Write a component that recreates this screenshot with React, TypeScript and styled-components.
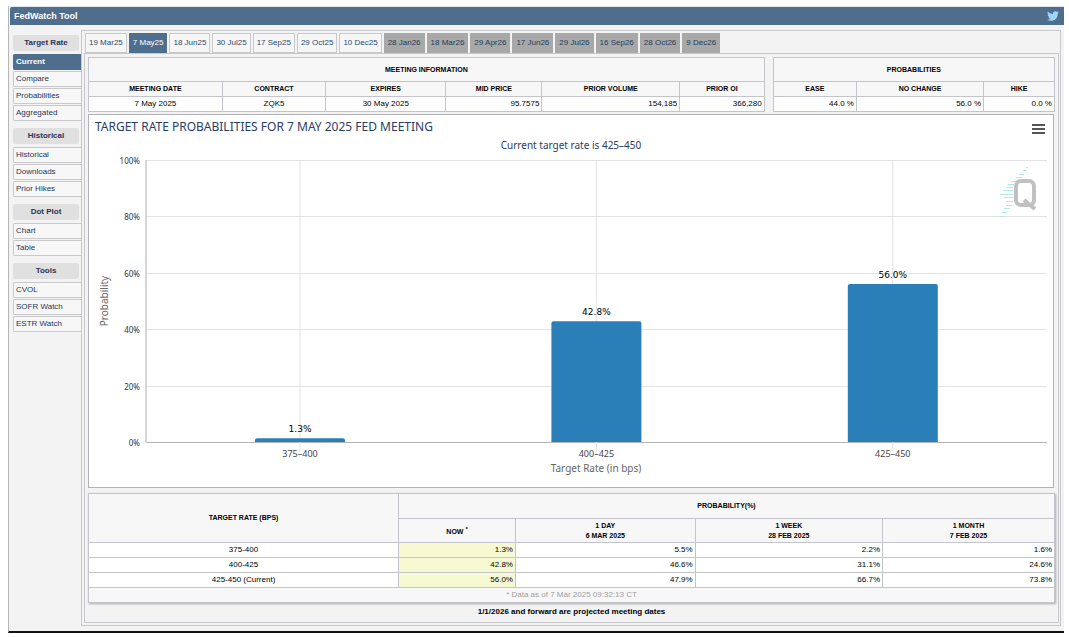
import React from "react";
import styled, { createGlobalStyle, css } from "styled-components";
import { FaTwitter } from "react-icons/fa";

const GlobalStyle = createGlobalStyle`
  * { box-sizing: border-box; }
  body { margin: 0; background: #fff; font-family: "Liberation Sans", Arial, sans-serif; font-size: 8px; line-height: 10px; color: #000; }
  button { font: inherit; }
`;

const chartFont = `"Noto Sans", "Lucida Grande", sans-serif`;
const valueFont = `"DejaVu Sans", "Lucida Grande", sans-serif`;

const Frame = styled.div`
  margin: 6px 5px 0 8px;
  border-left: 1px solid #b4b6b9;
  border-top: 1px solid #e4e6ea;
  border-bottom: 2px solid #111;
  background: #f3f3f3;
`;
const TitleBar = styled.header`
  display: flex;
  align-items: center;
  justify-content: space-between;
  height: 18px;
  margin-left: 1px;
  padding: 0 5px 1px 4px;
  background: #4f6d8d;
  border-radius: 2px 0 0 0;
`;
const AppName = styled.h1`
  margin: 0;
  color: #fff;
  font-size: 9px;
  line-height: 12px;
`;
const SocialLink = styled.a`
  display: flex;
  color: #9ed6fb;
  font-size: 12px;
`;
const Body = styled.div`
  display: flex;
  padding: 5px 3px 5px 4px;
`;
const Sidebar = styled.nav`
  flex: 0 0 68px;
  padding-top: 5px;
`;
const Group = styled.section`
  margin-bottom: 7px;
`;
const GroupTitle = styled.h2`
  margin: 0 2px 3px 0;
  padding: 0;
  height: 16px;
  line-height: 16px;
  font-size: 8px;
  text-align: center;
  color: #2a3454;
  background: #e0e0e0;
  border-radius: 2px;
`;
const NavItem = styled.a<{ $active?: boolean }>`
  display: block;
  height: 16px;
  margin-bottom: 1px;
  padding-left: 2px;
  line-height: 14px;
  border: 1px solid #c9c9cb;
  border-right: 0;
  border-radius: 2px 0 0 2px;
  background: #f7f7f8;
  color: #2a3454;
  text-decoration: none;
  ${(p) => p.$active && css`
    background: #4f6d8d;
    border-color: #4f6d8d;
    color: #fff;
    font-weight: bold;
  `}
`;
const Panel = styled.main`
  flex: 1;
  min-width: 0;
  padding: 2px 1px 2px 2px;
  border: 1px solid #c6c8cc;
`;
const Tabs = styled.div`
  display: flex;
  gap: 2px;
  padding-left: 1px;
`;
const Tab = styled.button<{ $kind: string }>`
  height: 20px;
  padding: 0 3px;
  border: 1px solid #c9c9cb;
  background: #f6f6f7;
  color: #2b4a6b;
  white-space: nowrap;
  ${(p) => p.$kind === "active" && css`
    background: #4f6d8d;
    border-color: #4f6d8d;
    color: #fff;
  `}
  ${(p) => p.$kind === "projected" && css`
    background: #a8a8a8;
    border-color: #a8a8a8;
    color: #1f3d58;
  `}
`;
const Content = styled.div`
  padding: 3px;
  border: 1px solid #c6c8cc;
`;
const Summary = styled.div`
  display: grid;
  grid-template-columns: 676fr 282fr;
  gap: 8px;
  margin-bottom: 2px;
`;
const Table = styled.table<{ $shadow?: boolean }>`
  width: 100%;
  table-layout: fixed;
  border-collapse: collapse;
  background: #fff;
  box-shadow: ${(p) => (p.$shadow ? "1px 1px 2px #aaa" : "none")};
`;
const Col = styled.col<{ $w: number }>`
  width: ${(p) => p.$w}%;
`;
const Th = styled.th<{ $h: number }>`
  height: ${(p) => p.$h}px;
  padding: 0;
  border: 1px solid #c3c5cb;
  background: #f7f7f8;
  font-size: 7px;
  line-height: 10px;
  text-transform: uppercase;
`;
const Td = styled.td<{ $align?: string; $now?: boolean }>`
  height: 15px;
  padding: 0 2px;
  border: 1px solid #c3c5cb;
  line-height: 12px;
  text-align: ${(p) => p.$align || "right"};
  background: ${(p) => (p.$now ? "#f7f9d2" : "#fff")};
`;
const NoteCell = styled.td`
  height: 15px;
  padding: 0;
  border: 1px solid #c3c5cb;
  background: #f7f7f8;
  color: #a0a0a0;
  text-align: center;
`;
const ChartCard = styled.section`
  margin: 0 1px 5px 0;
  padding-top: 4px;
  border: 1px solid #b0b2b6;
  background: #fff;
  font-family: ${chartFont};
`;
const ChartHead = styled.div`
  display: flex;
  justify-content: space-between;
  padding: 0 8px 0 6px;
`;
const ChartTitle = styled.h2`
  margin: 0;
  font-size: 12px;
  line-height: 16px;
  font-weight: normal;
  color: #2a3d63;
`;
const MenuButton = styled.button`
  display: flex;
  align-items: center;
  padding: 4px 0 0;
  border: 0;
  background: none;
`;
const Subtitle = styled.p`
  margin: 4px 0 4px;
  font-size: 10px;
  line-height: 12px;
  text-align: center;
  color: #2a3d63;
`;
const Plot = styled.svg`
  display: block;
  width: 100%;
  height: auto;
`;
const Footnote = styled.p`
  margin: 4px 0 2px;
  text-align: center;
  font-weight: bold;
`;

const groups = [
  { title: "Target Rate", items: ["Current", "Compare", "Probabilities", "Aggregated"] },
  { title: "Historical", items: ["Historical", "Downloads", "Prior Hikes"] },
  { title: "Dot Plot", items: ["Chart", "Table"] },
  { title: "Tools", items: ["CVOL", "SOFR Watch", "ESTR Watch"] },
];
const meetings = [
  "19 Mar25", "7 May25", "18 Jun25", "30 Jul25", "17 Sep25", "29 Oct25", "10 Dec25",
  "28 Jan26", "18 Mar26", "29 Apr26", "17 Jun26", "29 Jul26", "16 Sep26", "28 Oct26", "9 Dec26",
];
const bars = [
  { label: "375–400", value: 1.3 },
  { label: "400–425", value: 42.8 },
  { label: "425–450", value: 56.0 },
];
const rows = [
  ["375-400", "1.3%", "5.5%", "2.2%", "1.6%"],
  ["400-425", "42.8%", "46.6%", "31.1%", "24.6%"],
  ["425-450 (Current)", "56.0%", "47.9%", "66.7%", "73.8%"],
];
const stripes = [
  [37, 2, 0], [34, 3, 3], [30, 5, 7], [27, 6, 10], [22, 5, 14], [19, 6, 17], [17, 7, 20],
  [14, 10, 23], [11, 13, 27], [15, 9, 30], [17, 7, 34], [17, 6, 38], [15, 6, 41], [13, 5, 45], [11, 4, 49],
];

const BASE = 287;
const SPAN = 282;

function BarChart() {
  return (
    <Plot viewBox="0 0 964 332" fontFamily={chartFont} role="img" aria-label="Target rate probabilities">
      {[0, 20, 40, 60, 80, 100].map((v) => {
        const y = Math.round(BASE - (v / 100) * SPAN) + 0.5;
        return (
          <g key={v}>
            <line x1="57" x2="958" y1={y} y2={y} stroke={v ? "#e3e3e3" : "#b5b5b5"} />
            <text x="51" y={y + 3} fontSize="8" textAnchor="end" fill="#333">{v}%</text>
          </g>
        );
      })}
      <line x1="57" x2="57" y1="5" y2={BASE + 1} stroke="#d6d6d6" strokeWidth="2" />
      {bars.map((b, i) => {
        const cx = 211 + i * 296.4;
        const h = (b.value / 100) * SPAN;
        return (
          <g key={b.label}>
            <line x1={cx} x2={cx} y1="5" y2={BASE + 10} stroke="#e3e3e3" />
            <path
              d={`M${cx - 45} ${BASE}V${BASE - h + 2}q0-2 2-2h86q2 0 2 2V${BASE}z`}
              fill="#2a7fb9"
            />
            <text x={cx} y={BASE - h - 6} fontFamily={valueFont} fontSize="9" textAnchor="middle" fill="#000">{b.value.toFixed(1)}%</text>
            <text x={cx} y={BASE + 15} fontSize="9" textAnchor="middle" fill="#444">{b.label}</text>
          </g>
        );
      })}
      <text x="507" y="317" fontSize="10" textAnchor="middle" fill="#666">Target Rate (in bps)</text>
      <text transform="translate(19 146) rotate(-90)" fontSize="10" textAnchor="middle" fill="#666">Probability</text>
      <g transform="translate(900 12)">
        {stripes.map(([x, w, y]) => (
          <rect key={y} x={x} y={y} width={w} height="1" fill="#b5e6ee" />
        ))}
        <rect x="27" y="14" width="18" height="24" rx="5" fill="none" stroke="#c0c0c0" strokeWidth="4" />
        <path d="M35 33L46 42" stroke="#c0c0c0" strokeWidth="4" />
      </g>
    </Plot>
  );
}

export default function App() {
  return (
    <>
      <GlobalStyle />
      <Frame>
        <TitleBar>
          <AppName>FedWatch Tool</AppName>
          <SocialLink href="#" aria-label="Twitter"><FaTwitter /></SocialLink>
        </TitleBar>
        <Body>
          <Sidebar>
            {groups.map((g) => (
              <Group key={g.title}>
                <GroupTitle>{g.title}</GroupTitle>
                {g.items.map((it) => (
                  <NavItem key={it} href="#" $active={it === "Current"}>{it}</NavItem>
                ))}
              </Group>
            ))}
          </Sidebar>
          <Panel>
            <Tabs>
              {meetings.map((m, i) => (
                <Tab key={m} type="button" $kind={i === 1 ? "active" : i > 6 ? "projected" : "normal"}>{m}</Tab>
              ))}
            </Tabs>
            <Content>
              <Summary>
                <Table>
                  <colgroup>
                    <Col $w={19.8} /><Col $w={15.3} /><Col $w={17.8} /><Col $w={14.2} /><Col $w={20.4} /><Col $w={12.5} />
                  </colgroup>
                  <thead>
                    <tr><Th $h={24} colSpan={6}>Meeting Information</Th></tr>
                    <tr>
                      {["Meeting Date", "Contract", "Expires", "Mid Price", "Prior Volume", "Prior OI"].map((h) => (
                        <Th key={h} $h={15}>{h}</Th>
                      ))}
                    </tr>
                  </thead>
                  <tbody>
                    <tr>
                      <Td $align="center">7 May 2025</Td>
                      <Td $align="center">ZQK5</Td>
                      <Td $align="center">30 May 2025</Td>
                      <Td>95.7575</Td>
                      <Td>154,185</Td>
                      <Td>366,280</Td>
                    </tr>
                  </tbody>
                </Table>
                <Table>
                  <colgroup><Col $w={29.6} /><Col $w={45.2} /><Col $w={25.2} /></colgroup>
                  <thead>
                    <tr><Th $h={24} colSpan={3}>Probabilities</Th></tr>
                    <tr><Th $h={15}>Ease</Th><Th $h={15}>No Change</Th><Th $h={15}>Hike</Th></tr>
                  </thead>
                  <tbody>
                    <tr><Td>44.0 %</Td><Td>56.0 %</Td><Td>0.0 %</Td></tr>
                  </tbody>
                </Table>
              </Summary>
              <ChartCard>
                <ChartHead>
                  <ChartTitle>TARGET RATE PROBABILITIES FOR 7 MAY 2025 FED MEETING</ChartTitle>
                  <MenuButton type="button" aria-label="Chart menu">
                    <svg width="13" height="12" viewBox="0 0 13 12">
                      <path d="M0 2h13M0 6h13M0 10h13" stroke="#555" strokeWidth="2" />
                    </svg>
                  </MenuButton>
                </ChartHead>
                <Subtitle>Current target rate is 425–450</Subtitle>
                <BarChart />
              </ChartCard>
              <Table $shadow>
                <colgroup><Col $w={32.1} /><Col $w={12.1} /><Col $w={18.6} /><Col $w={19.4} /><Col $w={17.8} /></colgroup>
                <thead>
                  <tr><Th $h={25} rowSpan={2}>Target Rate (bps)</Th><Th $h={25} colSpan={4}>Probability(%)</Th></tr>
                  <tr>
                    <Th $h={24}>Now <sup>*</sup></Th>
                    <Th $h={24}>1 Day<br />6 Mar 2025</Th>
                    <Th $h={24}>1 Week<br />28 Feb 2025</Th>
                    <Th $h={24}>1 Month<br />7 Feb 2025</Th>
                  </tr>
                </thead>
                <tbody>
                  {rows.map((r) => (
                    <tr key={r[0]}>
                      {r.map((c, i) => (
                        <Td key={i} $align={i ? "right" : "center"} $now={i === 1}>{c}</Td>
                      ))}
                    </tr>
                  ))}
                  <tr><NoteCell colSpan={5}>* Data as of 7 Mar 2025 09:32:13 CT</NoteCell></tr>
                </tbody>
              </Table>
              <Footnote>1/1/2026 and forward are projected meeting dates</Footnote>
            </Content>
          </Panel>
        </Body>
      </Frame>
    </>
  );
}
